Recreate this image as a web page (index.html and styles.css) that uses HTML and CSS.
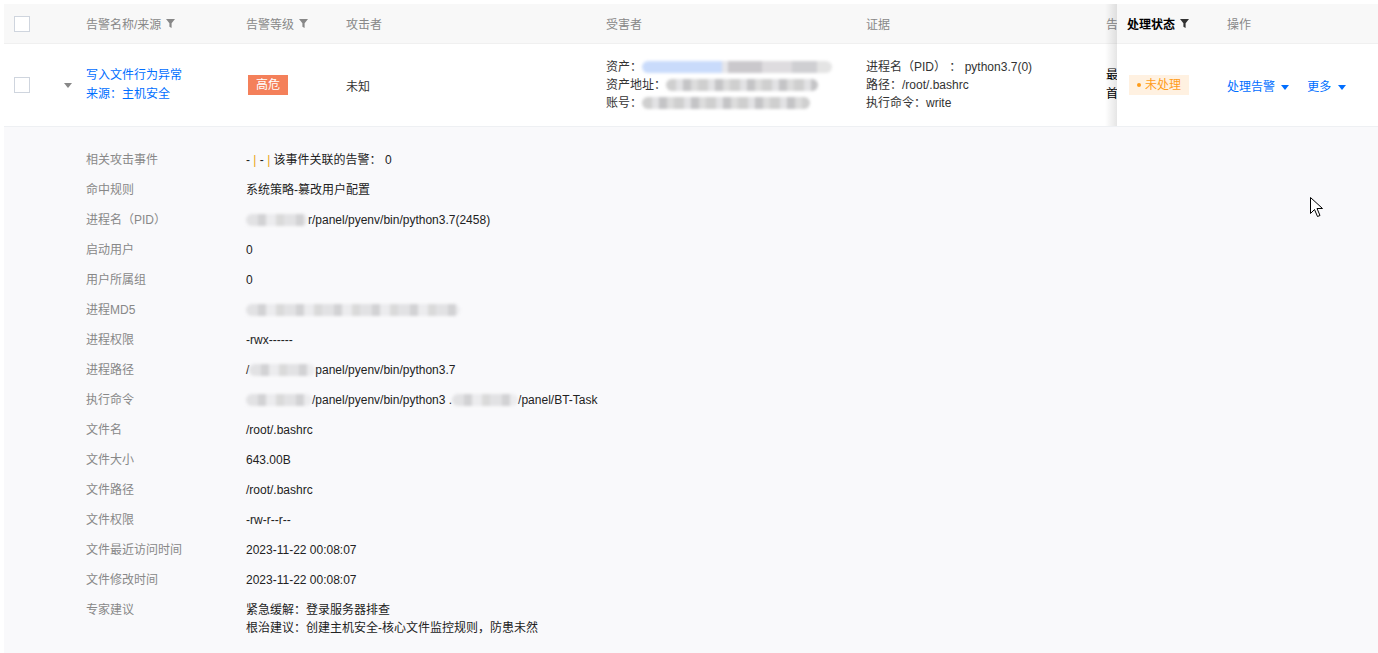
FILE: index.html
```html
<!DOCTYPE html>
<html lang="zh-CN">
<head>
    <meta charset="UTF-8">
    <meta name="viewport" content="width=device-width, initial-scale=1.0">
    <title>告警列表</title>
    <link rel="stylesheet" href="styles.css">
</head>
<body>

<div class="table">
    <div class="table-top">
        <!-- scrollable columns -->
        <div class="scroll-part">
            <div class="row head">
                <div class="cell c-chk"><span class="checkbox"></span></div>
                <div class="cell c-exp"></div>
                <div class="cell c-name">告警名称/来源 <svg class="funnel" viewBox="0 0 9 9"><path d="M0 0h9L5.6 4.2V9L3.4 7.8V4.2z"/></svg></div>
                <div class="cell c-level">告警等级 <svg class="funnel" viewBox="0 0 9 9"><path d="M0 0h9L5.6 4.2V9L3.4 7.8V4.2z"/></svg></div>
                <div class="cell c-attacker">攻击者</div>
                <div class="cell c-victim">受害者</div>
                <div class="cell c-evidence">证据</div>
                <div class="cell c-time">告警时间</div>
            </div>
            <div class="row body">
                <div class="cell c-chk"><span class="checkbox"></span></div>
                <div class="cell c-exp"><span class="caret"></span></div>
                <div class="cell c-name">
                    <div class="lines link">
                        <div>写入文件行为异常</div>
                        <div>来源：主机安全</div>
                    </div>
                </div>
                <div class="cell c-level"><span class="tag-high">高危</span></div>
                <div class="cell c-attacker">未知</div>
                <div class="cell c-victim">
                    <div class="lines">
                        <div>资产：<span class="blur blue-blur" style="width: 190px"></span></div>
                        <div>资产地址：<span class="blur" style="width: 152px"></span></div>
                        <div>账号：<span class="blur" style="width: 168px"></span></div>
                    </div>
                </div>
                <div class="cell c-evidence">
                    <div class="lines">
                        <div>进程名（PID） ： python3.7(0)</div>
                        <div>路径：/root/.bashrc</div>
                        <div>执行命令：write</div>
                    </div>
                </div>
                <div class="cell c-time">
                    <div class="lines tall">
                        <div>最近告警时间</div>
                        <div>首次告警时间</div>
                    </div>
                </div>
            </div>
        </div>

        <!-- fixed right columns -->
        <div class="fixed-part">
            <div class="row head">
                <div class="cell c-status strong">处理状态 <svg class="funnel dark" viewBox="0 0 9 9"><path d="M0 0h9L5.6 4.2V9L3.4 7.8V4.2z"/></svg></div>
                <div class="cell c-op">操作</div>
            </div>
            <div class="row body">
                <div class="cell c-status"><span class="tag-status"><span class="dot"></span>未处理</span></div>
                <div class="cell c-op">
                    <span class="op-link">处理告警 <span class="caret blue"></span></span>
                    <span class="op-link">更多 <span class="caret blue"></span></span>
                </div>
            </div>
        </div>
    </div>

    <!-- expanded detail -->
    <div class="detail">
        <div class="d-row"><div class="d-label">相关攻击事件</div><div class="d-value">- <span class="sep">|</span> - <span class="sep">|</span> 该事件关联的告警： 0</div></div>
        <div class="d-row"><div class="d-label">命中规则</div><div class="d-value">系统策略-篡改用户配置</div></div>
        <div class="d-row"><div class="d-label">进程名（PID）</div><div class="d-value"><span class="blur light" style="width: 62px"></span>r/panel/pyenv/bin/python3.7(2458)</div></div>
        <div class="d-row"><div class="d-label">启动用户</div><div class="d-value">0</div></div>
        <div class="d-row"><div class="d-label">用户所属组</div><div class="d-value">0</div></div>
        <div class="d-row"><div class="d-label">进程MD5</div><div class="d-value"><span class="blur light" style="width: 214px"></span></div></div>
        <div class="d-row"><div class="d-label">进程权限</div><div class="d-value">-rwx------</div></div>
        <div class="d-row"><div class="d-label">进程路径</div><div class="d-value">/<span class="blur light" style="width: 66px"></span>panel/pyenv/bin/python3.7</div></div>
        <div class="d-row"><div class="d-label">执行命令</div><div class="d-value"><span class="blur light" style="width: 66px"></span>/panel/pyenv/bin/python3 .<span class="blur light" style="width: 66px"></span>/panel/BT-Task</div></div>
        <div class="d-row"><div class="d-label">文件名</div><div class="d-value">/root/.bashrc</div></div>
        <div class="d-row"><div class="d-label">文件大小</div><div class="d-value">643.00B</div></div>
        <div class="d-row"><div class="d-label">文件路径</div><div class="d-value">/root/.bashrc</div></div>
        <div class="d-row"><div class="d-label">文件权限</div><div class="d-value">-rw-r--r--</div></div>
        <div class="d-row"><div class="d-label">文件最近访问时间</div><div class="d-value">2023-11-22 00:08:07</div></div>
        <div class="d-row"><div class="d-label">文件修改时间</div><div class="d-value">2023-11-22 00:08:07</div></div>
        <div class="d-row"><div class="d-label">专家建议</div><div class="d-value">紧急缓解：登录服务器排查<br>根治建议：创建主机安全-核心文件监控规则，防患未然</div></div>
    </div>
</div>

<!-- mouse pointer in the screenshot -->
<svg class="pointer" width="14" height="22" viewBox="0 0 14 22">
    <path d="M0.5 0.5V16.5L4.5 12.5L7.5 19.5L10 18.5L7 11.5H12.5Z" fill="#fff" stroke="#000" stroke-width="1"/>
</svg>

</body>
</html>
```

FILE: styles.css
```css
body {
    margin: 0;
    padding: 4px 0 0 4px;
    background: #fff;
    font-family: "Liberation Sans", Arial, "Noto Sans CJK SC", sans-serif;
    font-size: 12px;
    color: #333;
}
.table {
    width: 1374px;
}
.table-top {
    display: flex;
    border-bottom: 1px solid #eef0f3;
}
.scroll-part {
    width: 1113px;
    overflow: hidden;
}
.fixed-part {
    flex: 1;
    position: relative;
    background: #fff;
}
.fixed-part::before {
    content: "";
    position: absolute;
    left: -12px;
    top: 0;
    bottom: 0;
    width: 12px;
    background: linear-gradient(to right, rgba(0, 0, 0, 0), rgba(0, 0, 0, 0.1));
}
.row {
    display: flex;
    white-space: nowrap;
}
.row.head {
    height: 39px;
    background: #f8f8f8;
    border-bottom: 1px solid #f0f0f0;
    color: #888;
}
.row.body {
    height: 82px;
    background: #fff;
}
.cell {
    display: flex;
    align-items: center;
    padding-left: 10px;
    box-sizing: border-box;
    flex-shrink: 0;
}
.c-chk { width: 50px; }
.c-exp { width: 22px; }
.c-name { width: 160px; }
.c-level { width: 100px; }
.c-attacker { width: 260px; }
.c-victim { width: 260px; }
.c-evidence { width: 240px; }
.c-time { width: 160px; }
.c-status { width: 100px; }
.c-op { width: 160px; }
.strong {
    color: #000;
    font-weight: bold;
}
.funnel {
    width: 9px;
    height: 9px;
    margin-left: 5px;
    fill: #888;
}
.funnel.dark {
    fill: #333;
}
.checkbox {
    display: block;
    width: 14px;
    height: 14px;
    border: 1px solid #cfd5de;
    background: #fff;
}
.caret {
    display: inline-block;
    width: 0;
    height: 0;
    border-left: 4px solid transparent;
    border-right: 4px solid transparent;
    border-top: 5px solid #888;
}
.caret.blue {
    border-top-color: #006eff;
    margin-left: 3px;
    vertical-align: 1px;
}
.lines {
    line-height: 18px;
}
.lines.tall {
    line-height: 19px;
    color: #000;
}
.link {
    color: #006eff;
    line-height: 19px;
}
.tag-high {
    margin-left: 2px;
    padding: 0 8px;
    line-height: 20px;
    background: #f4805a;
    color: #fff;
}
.tag-status {
    display: inline-flex;
    align-items: center;
    margin-left: 2px;
    padding: 0 8px;
    line-height: 20px;
    background: #fff1e1;
    color: #ff9c19;
}
.dot {
    width: 4px;
    height: 4px;
    border-radius: 50%;
    background: #ff9c19;
    margin-right: 4px;
}
.op-link {
    color: #006eff;
    margin-right: 18px;
}
.blur {
    display: inline-block;
    height: 12px;
    vertical-align: -2px;
    border-radius: 6px;
    filter: blur(1.5px);
    background: repeating-linear-gradient(to right, #cfcfcf 0 10px, #e2e2e4 10px 17px, #c4c4c6 17px 25px, #dcdcdc 25px 32px);
}
.blue-blur {
    background: linear-gradient(to right, #c9dbfb 0 80px, #e6e6ea 80px 86px, #cac8cc 86px 120px, #dedcdf 120px 150px, #cfcfd2 150px 175px, #e4e4e4 175px);
}
.blur.light {
    background: repeating-linear-gradient(to right, #e2e2e4 0 12px, #d2d2d4 12px 20px, #ececee 20px 30px, #dadada 30px 38px);
}
.detail {
    background: #f9f9fb;
    padding: 18px 0 12px 82px;
}
.d-row {
    display: flex;
    padding: 6px 0;
    line-height: 18px;
}
.d-label {
    width: 160px;
    color: #888;
    flex-shrink: 0;
}
.d-value {
    color: #222;
}
.sep {
    color: #e8a317;
}
.pointer {
    position: absolute;
    left: 1310px;
    top: 197px;
}
```
